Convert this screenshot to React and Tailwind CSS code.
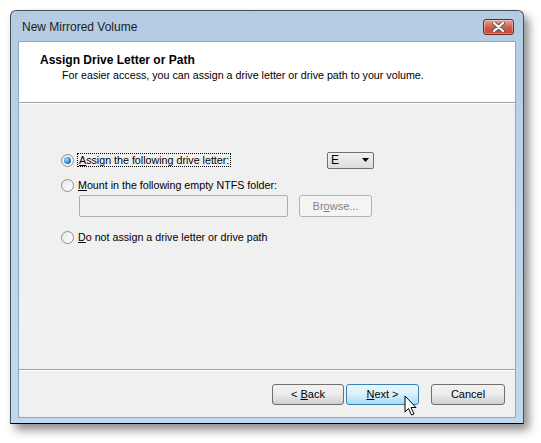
import React from 'react';

const FONT = { fontFamily: '"Liberation Sans", Arial, sans-serif' };

function Radio({ checked }) {
  return (
    <span className="relative inline-flex h-[13px] w-[13px] shrink-0 items-center justify-center rounded-full border border-[#8e8f8f] bg-gradient-to-br from-[#e6e6e6] to-[#ffffff]">
      {checked && (
        <span className="h-[7px] w-[7px] rounded-full bg-[radial-gradient(circle_at_35%_35%,#9be0ff_0%,#2c8ad6_55%,#0b4a8e_100%)]" />
      )}
    </span>
  );
}

function Button({ children, hot, disabled, className = '' }) {
  return (
    <div
      className={
        'flex h-[21px] items-center justify-center rounded-[3px] border text-[11px] ' +
        (hot
          ? 'border-[#3c7fb1] bg-gradient-to-b from-[#eaf6fd] via-[#d9f0fc] to-[#a7d9f5] text-black '
          : disabled
          ? 'border-[#adb2b5] bg-[#f4f4f4] text-[#838383] '
          : 'border-[#707070] bg-gradient-to-b from-[#f2f2f2] via-[#ebebeb] to-[#cfcfcf] text-black ') +
        className
      }
    >
      {children}
    </div>
  );
}

export default function App() {
  return (
    <div className="h-[443px] w-[541px] overflow-hidden bg-white pl-[10px] pt-[10px]" style={FONT}>
      {/* window */}
      <div className="flex h-[414px] w-[514px] flex-col rounded-t-[6px] border border-[#4a4f55] border-b-black bg-gradient-to-b from-[#b4cbe4] via-[#bcd4ec] to-[#c2d8ee] shadow-[5px_6px_10px_rgba(0,0,0,0.45)]">
        {/* title bar */}
        <div className="flex h-[30px] shrink-0 items-center justify-between pl-[11px] pr-[9px]">
          <span className="pt-[1px] text-[12px] text-[#1c1c1c]">New Mirrored Volume</span>
          <div className="mt-[1px] flex h-[16px] w-[31px] items-center justify-center rounded-[3px] border border-[#6b2a22] bg-gradient-to-b from-[#e8a595] via-[#cf5f4c] to-[#c24432] shadow-[inset_0_0_0_1px_rgba(255,255,255,0.35)]">
            <svg width="13" height="10" viewBox="0 0 13 10">
              <path d="M2 1 L11 9 M11 1 L2 9" stroke="#5a5a5a" strokeWidth="4" strokeLinecap="round" />
              <path d="M2 1 L11 9 M11 1 L2 9" stroke="#ffffff" strokeWidth="2.2" strokeLinecap="round" />
            </svg>
          </div>
        </div>

        {/* client area */}
        <div className="mx-[7px] flex h-[377px] flex-col border border-[#8ea6c0] bg-[#f0f0f0]">
          {/* header */}
          <div className="flex h-[61px] shrink-0 flex-col border-b border-[#a0a0a0] bg-white pl-[21px] pt-[10px]">
            <span className="text-[12px] font-bold leading-[16px] text-black">Assign Drive Letter or Path</span>
            <span className="pl-[22px] text-[10.7px] leading-[14px] text-black">
              For easier access, you can assign a drive letter or drive path to your volume.
            </span>
          </div>

          {/* body */}
          <div className="flex flex-1 flex-col border-t border-white pl-[42px] pt-[48px] pr-[141px] text-[10.7px]">
            <div className="flex h-[16px] items-center justify-between">
              <div className="flex items-center gap-[3px]">
                <Radio checked />
                <span className="border border-dotted border-black px-[1px] leading-[12px] text-black">
                  <span className="underline">A</span>ssign the following drive letter:
                </span>
              </div>
              <div className="flex h-[17px] w-[47px] items-center justify-between rounded-[2px] border border-[#707070] bg-gradient-to-b from-[#f2f2f2] to-[#dcdcdc] pl-[3px] pr-[4px] text-[12px]">
                <span>E</span>
                <svg width="7" height="4" viewBox="0 0 7 4">
                  <path d="M0 0 H7 L3.5 4 Z" fill="#000" />
                </svg>
              </div>
            </div>

            <div className="mt-[10px] flex items-center gap-[4px]">
              <Radio />
              <span className="leading-[14px] text-black">
                <span className="underline">M</span>ount in the following empty NTFS folder:
              </span>
            </div>

            <div className="mt-[3px] flex items-center gap-[11px] pl-[18px]">
              <div className="h-[22px] w-[209px] rounded-[2px] border border-[#afafaf] bg-[#f0f0f0]" />
              <Button disabled className="h-[22px] w-[73px]">
                <span>
                  Br<span className="underline">o</span>wse...
                </span>
              </Button>
            </div>

            <div className="mt-[13px] flex items-center gap-[4px]">
              <Radio />
              <span className="leading-[14px] text-black">
                <span className="underline">D</span>o not assign a drive letter or drive path
              </span>
            </div>
          </div>

          {/* footer */}
          <div className="flex h-[48px] shrink-0 flex-col border-t border-[#a0a0a0]">
            <div className="flex flex-1 items-start border-t border-white pl-[253px] pt-[13px]">
              <Button className="w-[72px]">
                <span>
                  &lt; <span className="underline">B</span>ack
                </span>
              </Button>
              <div className="relative ml-[2px]">
                <Button hot className="w-[73px]">
                  <span>
                    <span className="underline">N</span>ext &gt;
                  </span>
                </Button>
                <svg className="absolute left-[58px] top-[11px]" width="14" height="22" viewBox="0 0 14 22">
                  <path
                    d="M1 1 L1 17 L4.5 13.5 L7.5 20 L10 19 L7 12.5 L12 12.5 Z"
                    fill="#ffffff"
                    stroke="#000000"
                    strokeWidth="1"
                    strokeLinejoin="round"
                  />
                </svg>
              </div>
              <Button className="ml-[12px] w-[74px]">Cancel</Button>
            </div>
          </div>
        </div>
      </div>
    </div>
  );
}
